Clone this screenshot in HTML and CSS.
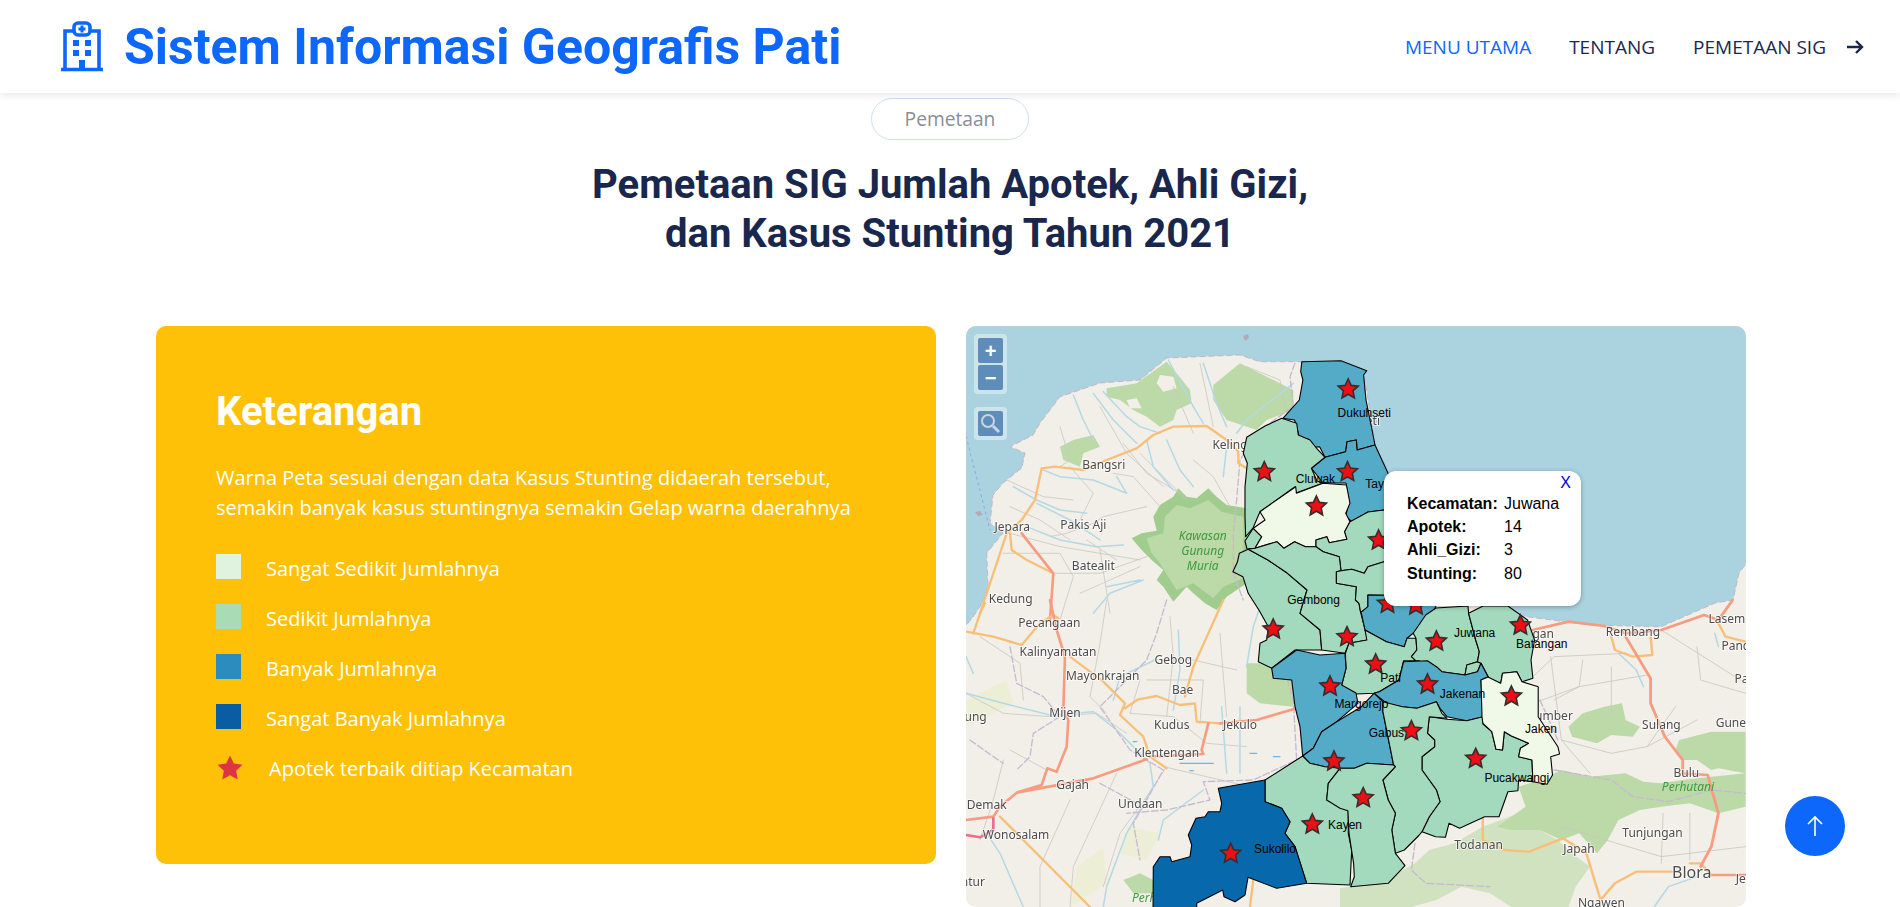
FILE: index.html
```html
<!DOCTYPE html>
<html lang="id">
<head>
  <meta charset="UTF-8">
  <title>Sistem Informasi Geografis Pati</title>
  <link rel="stylesheet" href="styles.css">
</head>
<body>
  <header class="navbar">
    <a class="brand" href="#">
      <svg class="brand-icon" viewBox="0 0 44 52" aria-hidden="true">
        <path class="brand-line" d="M5 47V10H14M39 47V10H30M14 10V6a4 4 0 0 1 4-4h8a4 4 0 0 1 4 4v4a4 4 0 0 1-4 4H18a4 4 0 0 1-4-4M1 48.500H43"/>
        <path class="brand-line thin" d="M22 4.500v7M18.500 8h7"/>
        <path class="brand-fill" d="M13 19h6v6h-6zM25 19h6v6h-6zM13 29h6v6h-6zM25 29h6v6h-6zM19 39h6v8h-6z"/>
      </svg>
      <span>Sistem Informasi Geografis Pati</span>
    </a>
    <nav class="menu">
      <a class="menu-link active" href="#">Menu Utama</a>
      <a class="menu-link" href="#">Tentang</a>
      <a class="menu-link" href="#">Pemetaan SIG</a>
      <svg class="menu-arrow" viewBox="0 0 18 16" aria-hidden="true"><path d="M1 8H16M10 2l6 6-6 6"/></svg>
    </nav>
  </header>

  <main class="section">
    <div class="section-title">
      <span class="badge">Pemetaan</span>
      <h1>Pemetaan SIG Jumlah Apotek, Ahli Gizi,<br>dan Kasus Stunting Tahun 2021</h1>
    </div>

    <div class="columns">
      <section class="legend-card">
        <h2>Keterangan</h2>
        <p>Warna Peta sesuai dengan data Kasus Stunting didaerah tersebut,<br>semakin banyak kasus stuntingnya semakin Gelap warna daerahnya</p>
        <ul class="legend">
          <li><span class="swatch very-few"></span>Sangat Sedikit Jumlahnya</li>
          <li><span class="swatch few"></span>Sedikit Jumlahnya</li>
          <li><span class="swatch many"></span>Banyak Jumlahnya</li>
          <li><span class="swatch very-many"></span>Sangat Banyak Jumlahnya</li>
          <li class="legend-star">
            <svg viewBox="0 0 28 27" aria-hidden="true"><path d="M14 1.500l3.800 8 8.700 1.200-6.300 6.100 1.500 8.700L14 21.300l-7.700 4.200 1.500-8.700-6.300-6.100 8.700-1.200z"/></svg>
            Apotek terbaik ditiap Kecamatan
          </li>
        </ul>
      </section>

      <section class="map">
        <svg class="map-canvas" viewBox="0 0 780 581" aria-label="Peta Kabupaten Pati">
          <defs>
            <path id="star" d="M0-10 3-3.600 10-2.900 4.800 1.800 6.200 8.800 0 5.200-6.200 8.800-4.800 1.800-10-2.900-3-3.600Z"/>
          </defs>

          <!-- base map -->
          <g class="base">
            <rect class="sea" width="780" height="581"/>
            <path class="land" d="M-10 312 7 291 17 276 22 260 20.700 227 37 207 24 197 27 169 37 157 55.700 142 59 127 44 120.700 67 109 74 97 94 70.700 134 57 174 54 200.700 32 274 29 294 35.700 336 35.700 400 60 409 119 421 146 480 260 548 289 624 299 695 300.700 749 277 767 274 773 247 790 225V600H-10Z"/>
            <path class="islet" d="M277 10l5-2 1 4-4 3zM9 186l5-1 3 4-5 1z"/>
            <path class="sea-line" d="M0 110 24 204"/>

            <!-- north west -->
            <g transform="translate(-6 -6) scale(.3333)">
              <path class="forest" d="M440 205 500 195 530 190 620 125 650 160 690 210 695 250 650 270 640 300 600 320 560 290 520 270 480 240 440 230ZM760 195 840 130 920 170 1000 210 1000 270 920 300 890 330 800 300 760 240ZM300 380 340 360 400 345 420 380 370 400 360 440 310 420Z"/>
              <path class="land-patch" d="M600 165 640 170 650 205 610 215 590 190ZM500 240 530 235 545 265 510 265Z"/>
              <path class="forest-edge" d="M515 655 545 640 590 632 580 590 600 555 640 530 655 505 680 530 710 535 745 505 770 530 800 555 860 565V790L800 830 770 870 735 850 700 820 680 800 640 845 610 800 590 780 610 750 575 720 545 690Z"/>
              <path class="forest" d="M560 655 610 640 615 590 650 555 690 565 745 540 785 575 850 590V775L790 800 760 835 700 790 650 810 625 770 600 730 575 700Z"/>
              <path class="minor" d="M300 320 330 420 300 440M420 260 500 400 610 500M490 370 560 460 660 520M140 480 250 530 340 540M150 640 300 680 540 720M270 650 320 640 400 610 430 590 560 560M130 700 300 700 340 770 300 900M420 690 450 880M640 200 700 340M720 130 760 320M540 400 680 540M280 760 420 760 560 710M360 820 540 740M860 140 960 180 990 330M330 440 400 520 360 600M150 560 240 600 330 660M380 660 470 720M460 460 520 470 600 560M700 420 760 470 810 560"/>
              <path class="river" d="M340 225 370 300 400 360M400 220 460 300 530 370M430 215 500 290 540 320 600 340M560 360 580 440 640 510M620 360 660 450 700 500M625 120 700 260 730 310M730 130 770 250 800 320M800 380 790 470M830 340 860 300 1000 190M250 450 300 470 400 480 500 520M160 500 230 540 300 570 380 580M230 550 330 600 420 660M200 620 300 660 410 680 490 675M470 470 500 520M440 800 540 780M400 880 450 820 550 780"/>
              <path class="admin" d="M1005 130 990 170 1000 260 900 330 840 420 830 540 820 640 820 760 850 840"/>
              <path class="road" d="M60 880 120 700 140 640 185 600 225 540 245 445 285 440 370 450 440 420 530 385 580 345 640 320 740 318 800 360 835 395 835 430 860 445M150 640 155 690 200 720 280 760"/>
              <path class="trunk" d="M185 640 280 760 270 900"/>
            </g>

            <!-- south west -->
            <g transform="translate(-6 274) scale(.3333)">
              <path class="field" d="M20 300 140 240 160 310 20 380ZM500 680 600 700 560 780 480 760ZM350 800 430 740 440 850 330 921Z"/>
              <path class="forest" d="M860 190 900 190 1000 240 1000 320 900 310 860 280ZM490 840 540 820 580 840 580 880 520 880Z"/>
              <path class="minor" d="M60 110 180 190 190 300M18 280 130 340 270 350 410 340 500 400M540 240 510 340 640 350 740 430 860 440M610 500 870 560M440 0 420 130 390 290 440 340M580 180 700 180 830 210M630 50 640 170 620 350M780 100 800 350M560 240 730 240 720 370M130 480 100 600 60 720M330 600 240 800 240 921M470 520 340 800 330 921M150 450 260 510M620 500 560 590 480 700 430 860"/>
              <path class="river" d="M18 170 40 220M18 280 130 310 270 345 400 335 470 390 520 440 570 490 580 560 500 700 440 860 430 921M585 180 480 230 460 300M655 90 660 210 640 330M785 320 800 520M840 320 840 520M860 200 880 80 900 20M730 570 610 660 595 720M80 700 120 760 190 921"/>
              <path class="admin" d="M150 140 170 250 250 290 300 350 220 400 210 470 170 510M620 0 590 100 560 180 420 320 510 450 610 510 560 600 520 670 540 780M950 130 1000 300 1010 480 880 540 730 545 750 600 620 630 500 640M30 420 100 470 130 490M420 550 530 610"/>
              <path class="pond" d="M660 490H760M690 512H700M870 460H890M940 470H960M520 425H530"/>
              <path class="road" d="M18 95 100 110 185 135 240 70 280 45 295 55M40 100 60 40 75 10M330 170 430 245 495 310 480 345 550 410 570 470 620 505M495 325 535 298 590 288 660 315 705 310 710 365 780 370M675 290 700 200 790 0M120 650 390 921M880 840 870 921"/>
              <path class="trunk" d="M270 0 290 90 315 170 310 330 325 360 320 440 290 515 262 505 245 555 170 578 120 620 100 650 18 660M170 578 400 535 560 478M780 370 890 360 1010 325M745 370 725 450 730 462 570 470"/>
              <path class="primary" d="M18 705 60 712 100 690 100 655"/>
            </g>

            <!-- south east -->
            <g transform="translate(374 274) scale(.357 .3333)">
              <path class="forest light" d="M400 680 450 660 500 640 560 690 610 720 650 760 700 800 660 860 640 921H480L420 880 340 860 270 900 200 921H0V865L80 850 160 820 210 790 250 750 320 730Z"/>
              <path class="forest" d="M640 380 680 340 740 320 790 310 800 360 840 380 820 410 760 405 720 430 650 410ZM950 420 1040 395 1136 395V520L1060 505 1040 510 1000 480 960 480 940 450ZM500 560 560 540 620 510 700 530 800 520 850 545 900 550 960 540 1040 530 1136 520V620L1060 640 980 610 900 620 840 630 780 660 750 720 720 760 670 700 620 720 560 690 480 690 440 680 520 620Z"/>
              <path class="minor" d="M540 310 670 260 860 225M620 420 760 460 860 440 940 320M590 170 620 420 700 520M900 90 1136 250M680 180 670 260 600 300M1000 140 1010 240 1136 280M540 230 600 170 800 160M760 200V340M620 680 900 770 1136 740M905 640 900 790M980 640V780M1000 360 860 440"/>
              <path class="river" d="M780 160 830 210 850 260M1050 100 1060 140M880 921 920 860 1000 830"/>
              <path class="admin" d="M600 510 760 540 820 590 920 605 1040 570 1136 580M210 730 200 810 240 850 420 860M560 300 610 420"/>
              <path class="road" d="M400 650V720L460 750 530 755 625 715 690 760 730 900 770 850 830 815 930 815M760 110 770 150 820 170 875 165 870 110M1060 70 1080 110 1136 125M980 790H1010L1040 825"/>
              <path class="trunk" d="M540 90 640 65 740 78 800 100 900 90 1020 45 1060 60 1100 0M800 110 870 235V310L910 410 960 480V520L1030 525 1060 640 1040 740 1010 800M1040 825H1136"/>
            </g>

            <g class="place">
              <text x="264" y="123">Keling</text>
              <text x="137.700" y="143">Bangsri</text>
              <text x="46.300" y="205">Jepara</text>
              <text x="117.300" y="203">Pakis Aji</text>
              <text x="127.300" y="244">Batealit</text>
              <text x="44.700" y="277">Kedung</text>
              <text x="83.300" y="301">Pecangaan</text>
              <text x="92" y="330">Kalinyamatan</text>
              <text x="207.300" y="338">Gebog</text>
              <text x="136.700" y="354">Mayonkrajan</text>
              <text x="216.700" y="368">Bae</text>
              <text class="end" x="20.700" y="395">Welung</text>
              <text x="99" y="391">Mijen</text>
              <text x="205.700" y="403">Kudus</text>
              <text x="274" y="403">Jekulo</text>
              <text x="200.700" y="431">Klentengan</text>
              <text x="106.700" y="463">Gajah</text>
              <text x="174.300" y="482">Undaan</text>
              <text x="20.700" y="483">Demak</text>
              <text x="50" y="513">Wonosalam</text>
              <text class="end" x="19" y="560">Guntur</text>
              <text class="end" x="414" y="99">Dukuhseti</text>
              <text class="end" x="588" y="312">Batangan</text>
              <text x="666.900" y="310">Rembang</text>
              <text x="760.800" y="297">Lasem</text>
              <text class="start" x="755.400" y="324">Pancur</text>
              <text class="start" x="768.600" y="357">Pamotan</text>
              <text x="584.700" y="394">Sumber</text>
              <text x="695.400" y="403">Sulang</text>
              <text class="start" x="749.700" y="401">Gunem</text>
              <text x="720.400" y="451">Bulu</text>
              <text x="686.500" y="511">Tunjungan</text>
              <text x="512.600" y="523">Todanan</text>
              <text x="613" y="527">Japah</text>
              <text class="city" x="725.800" y="552">Blora</text>
              <text class="start" x="769.700" y="557">Jepon</text>
              <text x="635.400" y="581">Ngawen</text>
              <text class="park" x="722" y="465">Perhutani</text>
              <text class="park start" x="166" y="576">Perhutani</text>
              <text class="park" x="236.700" y="214">Kawasan</text>
              <text class="park" x="236.700" y="229">Gunung</text>
              <text class="park" x="236.700" y="244">Muria</text>
            </g>
          </g>

          <!-- kecamatan -->
          <g class="regions">
            <polygon class="r-teal" points="335.800,35.700 375,34.700 400.800,44.700 397.600,49 400,74 405.400,100.700 409,119 391,124 390.400,114 381,115.700 379.700,125.700 359,131.300 353.600,120.700 344.700,121.300 343,113.300 334,113.300 328.600,94 316.900,92.300 333.300,74 336.900,54 334.700,45.700"/>
            <polygon class="r-teal" points="359,131.300 379.700,125.700 381,115.700 390.400,114 391,124 409,119 421.500,146 436,185 418,184 402,186 385.800,195.700 379.700,190 383,176 380,157 357,157 350,148 345.400,142.300"/>
            <polygon class="r-green" points="280.700,111.300 299,100 315.700,92.300 330.700,97.300 332.300,109 344,114 350.700,122.300 359,131.300 345.400,142.300 351,155 357,157 330,167 329,160.700 294,185.700 287,202 279.700,210.700 279,190.700 279,160.700 281.300,137.300 277.300,127.300"/>
            <polygon class="r-green" points="287.300,202.300 295.700,210.700 289,222.300 281,223 279,215"/>
            <polygon class="r-pale" points="329.700,160.700 330.400,167.300 357,157.300 380.400,159 384,177.300 379.700,187.300 384,195.700 378.600,205.700 381,213.300 363.300,216.700 360.800,210.700 350,214 350,220.700 339.400,220.700 328.600,215.700 318,222.300 310.800,215.700 289,222.300 295.700,210.700 287.300,202.300 299,194 294,185.700"/>
            <polygon class="r-green" points="384,195.700 402,186 418,184 470,200 470,260 418,235.700 401.900,240.700 398.300,247.300 385.800,243.300 375,244.700 373.300,230.700 357.200,225.700 350,220.700 350,214 360.800,210.700 363.300,216.700 381,213.300 378.600,205.700"/>
            <polygon class="r-green" points="282.200,223.300 301.900,234 321.500,247.300 341,264 334,287.300 354,304 355.700,324 329,324 305.700,342.300 292.300,335.700 294,317.300 300.700,314 302.300,300.700 292.900,284 282.200,267.300 276.900,250.700 266.900,245.700 271.500,235.700 273.300,227.300"/>
            <polygon class="r-green" points="350,220.700 357.200,225.700 373.300,230.700 375,244.700 370.400,245.700 370.400,257.300 390.400,260.700 389.400,274 393,277.300 394.700,286.700 398.300,300.700 401.900,314 383,317.300 379,327.300 355.700,324 354,304 334,287.300 341,264 321.500,247.300 301.900,234 282.200,223.300 289,222.300 310.800,215.700 318,222.300 328.600,215.700 339.400,220.700"/>
            <polygon class="r-green" points="370.400,245.700 375,244.700 385.800,243.300 398.300,247.300 401.900,240.700 418,235.700 470,240 470,270 401.900,269 401.900,280.700 394.700,286.700 393,277.300 389.400,274 390.400,260.700 370.400,257.300"/>
            <polygon class="r-teal" points="401.900,269 470,270 469.700,280.700 460.800,297.300 447.200,307.300 441,312.300 438.300,320.700 420.400,315.700 399,304 395.400,287.300 394.700,286.700 401.900,280.700"/>
            <polygon class="r-green" points="383,317.300 400.800,314 399,304 420.400,315.700 438.300,320.700 441,312.300 450,312.300 450.800,324 445.400,330.700 449.700,334.700 437.600,334.700 433,354 413.300,365.700 408,367.300 390,368 374,360.700 375.700,359 380,342.300 379.400,327.300"/>
            <polygon class="r-green" points="447.200,307.300 459.700,289 470,282 502,280 502.600,287.300 509.700,314 513.300,325.700 511.500,335.700 500.800,339 499,349 475.800,345.700 470.400,340.700 452.600,334.700 449.700,334.700 445.400,330.700 450.800,324 450,312.300"/>
            <polygon class="r-green" points="499,349 500.800,339 511.500,335.700 515,337.300 511.500,345.700"/>
            <polygon class="r-green" points="502.600,287.300 517,280 541.900,280 561.500,294 568.600,314 565,334 566.900,352.300 556,355.700 550.800,345.700 536.500,347.300 534.700,357.300 524,354 515,337.300 511.500,335.700 513.300,325.700 509.700,314"/>
            <polygon class="r-teal" points="413.300,365.700 433,354 437.600,335.700 461.500,334.700 470.400,340.700 475.800,345.700 499,349 511.500,345.700 515,337.300 522,350.700 515,354 516.900,390.700 500.800,394.700 481,390.700 474,382.300 470.400,375.700 450.800,382.300 436.500,380.700 424,379 418.600,375.700 408,367.300"/>
            <polygon class="r-teal" points="330.700,324 354,329 379,327.300 380,342.300 375.700,359 390,367 391.900,377.300 370.700,395.700 355.700,405.700 347.300,422.300 336.700,430 334,400.700 329,380.700 325.700,354 307.300,352.300 305.700,342.300"/>
            <polygon class="r-teal" points="336.700,430 347.300,422.300 355.700,405.700 370.700,395.700 395.400,380.700 408,367.300 416.900,375.700 416.900,385.700 427.600,439 400.800,437.300 388.300,442.300 374,442.300 359,440.700 344,437.300"/>
            <polygon class="r-green" points="463.300,390.700 481,393.300 500.800,394.700 516.900,390.700 516.900,398 525.800,405.700 530,423.300 536.500,424 538.300,405.700 545.400,410 562.600,417.300 554.400,422.300 552.600,430.700 566,434 566.900,455.700 552.600,454 551.900,464.700 541.900,465.700 533,490.700 518.600,490.700 493.600,502.300 483,497.300 479.400,511.300 469.700,510.700 456,505.700 463.300,490.700 474,475.700 470.400,464 456,444 456,430.700 468.600,420.700 468.600,414 461.500,407.300"/>
            <polygon class="r-pale" points="515,354 522,351 534.700,357.300 536.500,347.300 550.800,345.700 556,355.700 572.200,360.700 572.200,390.700 591.900,420.700 593.600,428 584.700,430.700 586.500,449 581,458.300 566.900,455.700 566,434 552.600,430.700 554.400,422.300 562.600,417.300 545.400,410 538.300,405.700 536.500,424 530,423.300 525.800,405.700 516.900,397.300 516,391"/>
            <polygon class="r-green" points="416.900,375.700 436.500,380.700 450.800,382.300 470.400,375.700 475.800,387.300 481,392.300 463.300,390.700 461.500,407.300 468.600,414 468.600,420.700 456,430.700 456,444 470.400,464 474,475.700 463.300,490.700 456,505.700 453.300,509 438.300,524 429.400,527.300 425.800,504 429.400,487.300 422.200,474 416.900,454 429.400,440.700 427.600,439 416.900,385.700"/>
            <polygon class="r-green" points="336.700,430 299,454 299,475.700 315.700,482.300 324,495.700 319,507.300 329,520.700 340.700,557.300 384,559 385.700,524 382.300,507.300 382.300,484 360.700,474 362.300,457.300 374,442.300 359,440.700 344,437.300"/>
            <polygon class="r-green" points="374,442.300 388.300,442.300 400.800,437.300 427.600,439 429.400,440.700 416.900,454 422.200,474 429.400,487.300 425.800,504 429.400,527.300 439,539.700 422.200,557.300 384.700,560.700 388.300,550.700 387.600,537.300 383,507.300 381.900,484.700 374,482.300 360.700,474 362.300,457.300"/>
            <polygon class="r-dark" points="252.300,462.300 299,454 299,475.700 315.700,482.300 324,495.700 319,507.300 329,520.700 340.700,557.300 310.700,562.300 282,551.300 279,569 269,575.700 258,570.700 256.700,564 230.700,577.300 230.700,590 187,590 187.300,540.700 194,530.700 204,530.700 205.700,535.700 224,530.700 225.700,519 222.300,509 230,492.300 239,490.700 242.300,485.700 254,485.700 255.700,477.300"/>
          </g>

          <g class="stars">
            <use href="#star" x="382.200" y="63"/>
            <use href="#star" x="298.300" y="145.700"/>
            <use href="#star" x="381.500" y="145.700"/>
            <use href="#star" x="350.400" y="180"/>
            <use href="#star" x="412.600" y="214"/>
            <use href="#star" x="421.500" y="277.300"/>
            <use href="#star" x="450" y="279"/>
            <use href="#star" x="307.200" y="303"/>
            <use href="#star" x="381" y="310.700"/>
            <use href="#star" x="470.400" y="315"/>
            <use href="#star" x="554.400" y="299"/>
            <use href="#star" x="409.700" y="338"/>
            <use href="#star" x="461.500" y="358"/>
            <use href="#star" x="545.400" y="370"/>
            <use href="#star" x="445.400" y="404.700"/>
            <use href="#star" x="509.700" y="432.300"/>
            <use href="#star" x="397.200" y="471.700"/>
            <use href="#star" x="364" y="360"/>
            <use href="#star" x="368" y="435"/>
            <use href="#star" x="346.300" y="498"/>
            <use href="#star" x="264.700" y="527.300"/>
          </g>

          <g class="region-names">
            <text x="398.300" y="90.700">Dukuhseti</text>
            <text x="349.400" y="157.300">Cluwak</text>
            <text x="412" y="161.700">Tayu</text>
            <text x="347.600" y="278">Gembong</text>
            <text x="508.600" y="311.300">Juwana</text>
            <text x="575.800" y="321.700">Batangan</text>
            <text x="424.700" y="355.700">Pati</text>
            <text x="496.500" y="371.700">Jakenan</text>
            <text x="395.400" y="382.300">Margorejo</text>
            <text x="420.400" y="411.300">Gabus</text>
            <text x="575" y="407.300">Jaken</text>
            <text x="550.800" y="456.300">Pucakwangi</text>
            <text x="379" y="502.700">Kayen</text>
            <text x="309" y="527.300">Sukolilo</text>
          </g>
        </svg>

        <div class="map-controls">
          <div class="control-group">
            <button class="control-btn" type="button">+</button>
            <button class="control-btn" type="button">−</button>
          </div>
          <div class="control-group">
            <button class="control-btn" type="button" aria-label="Cari">
              <svg viewBox="0 0 25 25" aria-hidden="true"><circle cx="10" cy="10" r="6"/><path class="handle" d="M15 15l6 6"/></svg>
            </button>
          </div>
        </div>

        <div class="popup">
          <a class="popup-close" href="#">X</a>
          <table>
            <tr><th>Kecamatan:</th><td>Juwana</td></tr>
            <tr><th>Apotek:</th><td>14</td></tr>
            <tr><th>Ahli_Gizi:</th><td>3</td></tr>
            <tr><th>Stunting:</th><td>80</td></tr>
          </table>
        </div>
      </section>
    </div>
  </main>

  <a class="back-top" href="#" aria-label="Kembali ke atas">
    <svg viewBox="0 0 24 24" aria-hidden="true"><path d="M12 22V3M5 10l7-7 7 7"/></svg>
  </a>
</body>
</html>
```

FILE: styles.css
```css
* {
  box-sizing: border-box;
}

html, body {
  height: 100%;
  overflow: hidden;
}

body {
  margin: 0;
  background: #fff;
  color: #19274d;
  font-family: "Open Sans", sans-serif;
}

a {
  text-decoration: none;
}

.navbar {
  height: 93px;
  padding: 0 36px 0 60px;
  display: flex;
  justify-content: space-between;
  align-items: center;
  background: #fff;
  box-shadow: 0 2px 8px rgba(0, 0, 0, 0.1);
  position: relative;
  z-index: 2;
}

.brand {
  display: flex;
  align-items: center;
  gap: 20px;
  color: #0d67fb;
  font-family: Roboto, sans-serif;
  font-weight: 700;
  font-size: 50px;
  line-height: 1;
}

.brand-icon {
  width: 44px;
  height: 52px;
}

.brand-line {
  fill: none;
  stroke: #0d67fb;
  stroke-width: 3.6;
}

.brand-line.thin {
  stroke-width: 3;
}

.brand-fill {
  fill: #0d67fb;
}

.menu {
  display: flex;
  align-items: center;
  gap: 38px;
}

.menu-link {
  color: #19274d;
  font-size: 19px;
  text-transform: uppercase;
}

.menu-link.active {
  color: #0d67fb;
}

.menu-arrow {
  width: 18px;
  height: 16px;
  margin-left: -18px;
  fill: none;
  stroke: #19274d;
  stroke-width: 2.4;
}

.section-title {
  text-align: center;
  padding-top: 5px;
}

.badge {
  display: inline-block;
  width: 158px;
  height: 42px;
  line-height: 39px;
  border: 1px solid #cddff5;
  border-radius: 21px;
  color: #8a8e96;
  font-size: 19.200px;
}

.section-title h1 {
  margin: 20px 0 0;
  font-family: Roboto, sans-serif;
  font-weight: 700;
  font-size: 40px;
  line-height: 49px;
  color: #19274d;
}

.columns {
  display: grid;
  grid-template-columns: 780px 780px;
  gap: 30px;
  justify-content: center;
  padding-left: 2px;
  margin-top: 68px;
  align-items: start;
}

.legend-card {
  height: 538px;
  padding: 60px;
  background: #ffc107;
  border-radius: 10px;
  color: #fff;
}

.legend-card h2 {
  margin: 0 0 25px;
  font-family: Roboto, sans-serif;
  font-size: 40px;
  line-height: 52px;
  font-weight: 700;
}

.legend-card p {
  margin: 0 0 31px;
  font-size: 20px;
  line-height: 30px;
}

.legend {
  margin: 0;
  padding: 0;
  list-style: none;
}

.legend li {
  display: flex;
  align-items: flex-start;
  height: 25px;
  margin-bottom: 25px;
  font-size: 20px;
  line-height: 29px;
}

.swatch {
  width: 25px;
  height: 25px;
  margin-right: 25px;
}

.very-few {
  background: #dff3de;
}

.few {
  background: #a8dcb5;
}

.many {
  background: #2b8cbe;
}

.very-many {
  background: #0a5ca3;
}

.legend-star svg {
  width: 28px;
  height: 27px;
  margin-right: 25px;
  fill: #dc3545;
}

.map {
  position: relative;
  height: 581px;
  border-radius: 10px;
  overflow: hidden;
  background: #f2efe9;
}

.map-canvas {
  display: block;
  width: 780px;
  height: 581px;
}

.base {
  filter: blur(0.35px);
}

.sea {
  fill: #aad3df;
}

.land {
  fill: #f2efe9;
  stroke: #c3b5c9;
  stroke-width: 1;
  stroke-dasharray: 6 3;
}

.land-patch {
  fill: #f2efe9;
}

.islet {
  fill: #b5a9b5;
}

.sea-line {
  fill: none;
  stroke: #8ea9e6;
  stroke-dasharray: 3 3;
  stroke-width: 1;
}

.forest {
  fill: #bcd9a8;
}

.forest.light {
  fill: #c8dfb6;
  opacity: 0.8;
}

.forest-edge {
  fill: #a0cd8e;
}

.field {
  fill: #eceed6;
}

.minor, .river, .admin, .road, .trunk, .primary, .pond {
  fill: none;
  stroke-linejoin: round;
  stroke-linecap: round;
}

.minor {
  stroke: #cbc7c2;
  stroke-width: 2.5;
}

.river {
  stroke: #b4d9e4;
  stroke-width: 4.5;
}

.admin {
  stroke: #c8b9d2;
  stroke-width: 4;
  stroke-dasharray: 20 8;
}

.road {
  stroke: #f8bf78;
  stroke-width: 7;
}

.trunk {
  stroke: #f79c80;
  stroke-width: 8;
}

.primary {
  stroke: #e8708e;
  stroke-width: 8;
}

.pond {
  stroke: #6db5ee;
  stroke-width: 4;
}

.place text {
  font-family: "Noto Sans", sans-serif;
  font-size: 12px;
  fill: #4c4c4c;
  stroke: rgba(255, 255, 255, 0.6);
  stroke-width: 2px;
  paint-order: stroke;
  text-anchor: middle;
}

.place .start {
  text-anchor: start;
}

.place .end {
  text-anchor: end;
}

.place .city {
  font-size: 16px;
}

.place .park {
  font-style: italic;
  fill: #3f9a3d;
  stroke: none;
}

.regions polygon {
  stroke: #000;
  stroke-width: 1.1;
  stroke-linejoin: round;
}

.r-teal {
  fill: #54abc8;
}

.r-green {
  fill: #a3d9bc;
}

.r-pale {
  fill: #f0f9e8;
}

.r-dark {
  fill: #0868ac;
}

.stars use {
  fill: #ee0f14;
  stroke: #3a2c2c;
  stroke-width: 1.6;
}

.region-names text {
  font-family: "Liberation Sans", sans-serif;
  font-size: 12px;
  fill: #000;
  text-anchor: middle;
}

.map-controls {
  position: absolute;
  top: 8px;
  left: 8px;
  display: flex;
  flex-direction: column;
  gap: 13px;
}

.control-group {
  display: flex;
  flex-direction: column;
  gap: 2px;
  padding: 4px;
  background: rgba(255, 255, 255, 0.4);
  border-radius: 4px;
}

.control-btn {
  width: 25px;
  height: 25px;
  padding: 0;
  border: 0;
  border-radius: 2px;
  background: #5f8db9;
  color: #fff;
  font-family: "Liberation Sans", sans-serif;
  font-size: 20px;
  font-weight: 700;
  line-height: 24px;
}

.control-btn svg {
  display: block;
  width: 25px;
  height: 25px;
  fill: none;
  stroke: #c5d6e4;
  stroke-width: 2;
}

.control-btn .handle {
  stroke-width: 3;
}

.popup {
  position: absolute;
  left: 418px;
  top: 145px;
  width: 197px;
  height: 135px;
  padding: 21px 0 0 23px;
  background: #fff;
  border-radius: 12px;
  box-shadow: 0 1px 5px rgba(0, 0, 0, 0.3);
  font-family: "Liberation Sans", sans-serif;
  font-size: 16px;
  color: #000;
}

.popup-close {
  position: absolute;
  top: 3px;
  right: 10px;
  color: #0000e6;
  font-size: 16px;
}

.popup table {
  border-collapse: collapse;
}

.popup th {
  width: 97px;
  padding: 0;
  height: 23.300px;
  text-align: left;
  white-space: nowrap;
}

.popup td {
  padding: 0;
}

.back-top {
  position: fixed;
  right: 55px;
  bottom: 51px;
  width: 60px;
  height: 60px;
  display: flex;
  justify-content: center;
  align-items: center;
  background: #0d67fb;
  border-radius: 50%;
}

.back-top svg {
  width: 24px;
  height: 24px;
  fill: none;
  stroke: #fff;
  stroke-width: 1.6;
}
```
